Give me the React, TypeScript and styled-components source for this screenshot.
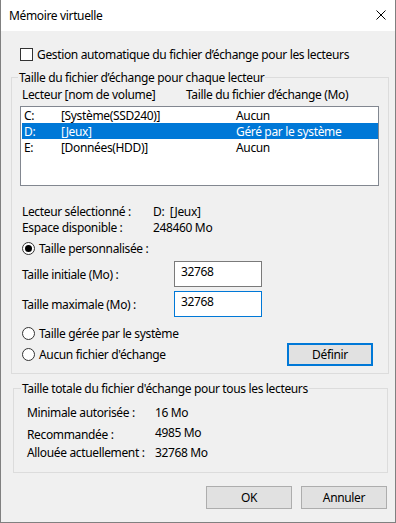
import React from "react";
import styled, { createGlobalStyle } from "styled-components";

const GlobalStyle = createGlobalStyle`
  html, body {
    margin: 0;
    padding: 0;
    background: #f0f0f0;
  }
  body {
    font-family: "Noto Sans", "Liberation Sans", sans-serif;
    font-size: 12px;
    letter-spacing: -0.35px;
    color: #000;
  }
`;

const Window = styled.div`
  width: 396px;
  height: 523px;
  box-sizing: border-box;
  border: 1px solid #808080;
  border-top: none;
  background: #f0f0f0;
  display: flex;
  flex-direction: column;
`;

const TitleBar = styled.div`
  height: 31px;
  flex: none;
  background: #fff;
  display: flex;
  align-items: center;
  justify-content: space-between;
  padding: 0 9px 0 8px;
`;

const Title = styled.span`
  line-height: 15px;
`;

const CloseIcon = styled.svg`
  width: 10px;
  height: 10px;
  margin-top: -2px;
`;

const Body = styled.div`
  display: flex;
  flex-direction: column;
`;

const CheckRow = styled.label`
  display: flex;
  align-items: center;
  gap: 4px;
  height: 15px;
  margin: 16px 0 0 19px;
`;

const CheckBox = styled.span`
  width: 13px;
  height: 13px;
  box-sizing: border-box;
  border: 1px solid #333;
  background: #fff;
`;

const Group = styled.fieldset<{ $m: string; $p: string }>`
  margin: ${(p) => p.$m};
  padding: ${(p) => p.$p};
  border: 1px solid #dcdcdc;
  min-width: 0;
`;

const Legend = styled.legend<{ $shift: number }>`
  padding: 0 1px;
  margin-left: ${(p) => p.$shift}px;
  line-height: 15px;
`;

const HeaderRow = styled.div`
  display: flex;
  padding-left: 2px;
  line-height: 15px;
`;

const HeaderCol = styled.span`
  width: 164px;
`;

const ListBox = styled.div`
  margin-top: 4px;
  height: 80px;
  box-sizing: border-box;
  border: 1px solid #828790;
  background: #fff;
  padding: 0 0 0 1px;
`;

const ListRow = styled.div<{ $selected?: boolean }>`
  display: flex;
  align-items: center;
  height: 16px;
  padding-left: 2px;
  background: ${(p) => (p.$selected ? "#0078d7" : "transparent")};
  color: ${(p) => (p.$selected ? "#fff" : "#000")};
`;

const Cell = styled.span<{ $w?: number }>`
  width: ${(p) => (p.$w ? `${p.$w}px` : "auto")};
  flex: none;
  white-space: nowrap;
`;

const Info = styled.div`
  margin-top: 18px;
  padding-left: 2px;
`;

const InfoRow = styled.div`
  display: flex;
  line-height: 16px;
`;

const InfoLabel = styled.span`
  width: 131px;
  flex: none;
`;

const RadioRow = styled.label<{ $mt: number }>`
  display: flex;
  align-items: center;
  gap: 4px;
  height: 15px;
  margin-top: ${(p) => p.$mt}px;
  padding-left: 2px;
`;

const Radio = styled.span<{ $checked?: boolean }>`
  width: 13px;
  height: 13px;
  box-sizing: border-box;
  border: 1px solid #333;
  border-radius: 50%;
  background: #fff;
  display: flex;
  align-items: center;
  justify-content: center;
  &::after {
    content: "";
    width: 7px;
    height: 7px;
    border-radius: 50%;
    background: ${(p) => (p.$checked ? "#000" : "transparent")};
  }
`;

const FieldRow = styled.div<{ $mt: number }>`
  display: flex;
  align-items: center;
  height: 26px;
  margin-top: ${(p) => p.$mt}px;
  padding-left: 2px;
`;

const FieldLabel = styled.span`
  width: 152px;
  flex: none;
`;

const TextBox = styled.div<{ $focused?: boolean }>`
  width: 88px;
  height: 26px;
  box-sizing: border-box;
  border: 1px solid ${(p) => (p.$focused ? "#0078d7" : "#7a7a7a")};
  background: #fff;
  padding: 2px 0 0 6px;
  line-height: 15px;
`;

const BottomRow = styled.div`
  display: flex;
  align-items: center;
  justify-content: space-between;
  height: 23px;
  margin-top: 2px;
`;

const Button = styled.button<{ $default?: boolean }>`
  width: 86px;
  height: 23px;
  box-sizing: border-box;
  padding: 0;
  margin: 0;
  font: inherit;
  letter-spacing: inherit;
  color: #000;
  background: #e1e1e1;
  border: ${(p) => (p.$default ? "2px solid #0078d7" : "1px solid #adadad")};
`;

const DefineButton = styled(Button)`
  margin-right: 6px;
`;

const StatRow = styled.div`
  display: flex;
  align-items: center;
  height: 20px;
`;

const StatLabel = styled.span<{ $drop?: boolean }>`
  width: 128px;
  flex: none;
  margin-top: ${(p) => (p.$drop ? 4 : 0)}px;
`;

const Footer = styled.div`
  display: flex;
  justify-content: flex-end;
  gap: 9px;
  margin-top: 13px;
  padding-right: 8px;
`;

const drives = [
  { letter: "C:", name: "[Système(SSD240)]", size: "Aucun" },
  { letter: "D:", name: "[Jeux]", size: "Géré par le système", selected: true },
  { letter: "E:", name: "[Données(HDD)]", size: "Aucun" },
];

const App: React.FC = () => {
  return (
    <>
      <GlobalStyle />
      <Window>
        <TitleBar>
          <Title>Mémoire virtuelle</Title>
          <CloseIcon viewBox="0 0 10 10">
            <path d="M0.5 0.5L9.5 9.5M9.5 0.5L0.5 9.5" stroke="#000" strokeWidth="1" />
          </CloseIcon>
        </TitleBar>
        <Body>
          <CheckRow>
            <CheckBox />
            Gestion automatique du fichier d’échange pour les lecteurs
          </CheckRow>

          <Group $m="8px 6px 0 10px" $p="2px 9px 7px 8px">
            <Legend $shift={-2}>Taille du fichier d’échange pour chaque lecteur</Legend>
            <HeaderRow>
              <HeaderCol>Lecteur [nom de volume]</HeaderCol>
              <span>Taille du fichier d’échange (Mo)</span>
            </HeaderRow>
            <ListBox>
              {drives.map((d) => (
                <ListRow key={d.letter} $selected={d.selected}>
                  <Cell $w={37}>{d.letter}</Cell>
                  <Cell $w={175}>{d.name}</Cell>
                  <Cell>{d.size}</Cell>
                </ListRow>
              ))}
            </ListBox>

            <Info>
              <InfoRow>
                <InfoLabel>Lecteur sélectionné :</InfoLabel>
                <span>D:&nbsp;&nbsp;[Jeux]</span>
              </InfoRow>
              <InfoRow>
                <InfoLabel>Espace disponible :</InfoLabel>
                <span>248460 Mo</span>
              </InfoRow>
            </Info>

            <RadioRow $mt={5}>
              <Radio $checked />
              Taille personnalisée :
            </RadioRow>
            <FieldRow $mt={5}>
              <FieldLabel>Taille initiale (Mo) :</FieldLabel>
              <TextBox>32768</TextBox>
            </FieldRow>
            <FieldRow $mt={4}>
              <FieldLabel>Taille maximale (Mo) :</FieldLabel>
              <TextBox $focused>32768</TextBox>
            </FieldRow>
            <RadioRow $mt={9}>
              <Radio />
              Taille gérée par le système
            </RadioRow>
            <BottomRow>
              <RadioRow $mt={0}>
                <Radio />
                Aucun fichier d'échange
              </RadioRow>
              <DefineButton $default>Définir</DefineButton>
            </BottomRow>
          </Group>

          <Group $m="7px 7px 0 12px" $p="6px 0 10px 13px">
            <Legend $shift={-6}>Taille totale du fichier d'échange pour tous les lecteurs</Legend>
            <StatRow>
              <StatLabel>Minimale autorisée :</StatLabel>
              <span>16 Mo</span>
            </StatRow>
            <StatRow>
              <StatLabel $drop>Recommandée :</StatLabel>
              <span>4985 Mo</span>
            </StatRow>
            <StatRow>
              <StatLabel>Allouée actuellement :</StatLabel>
              <span>32768 Mo</span>
            </StatRow>
          </Group>

          <Footer>
            <Button>OK</Button>
            <Button>Annuler</Button>
          </Footer>
        </Body>
      </Window>
    </>
  );
};

export default App;
